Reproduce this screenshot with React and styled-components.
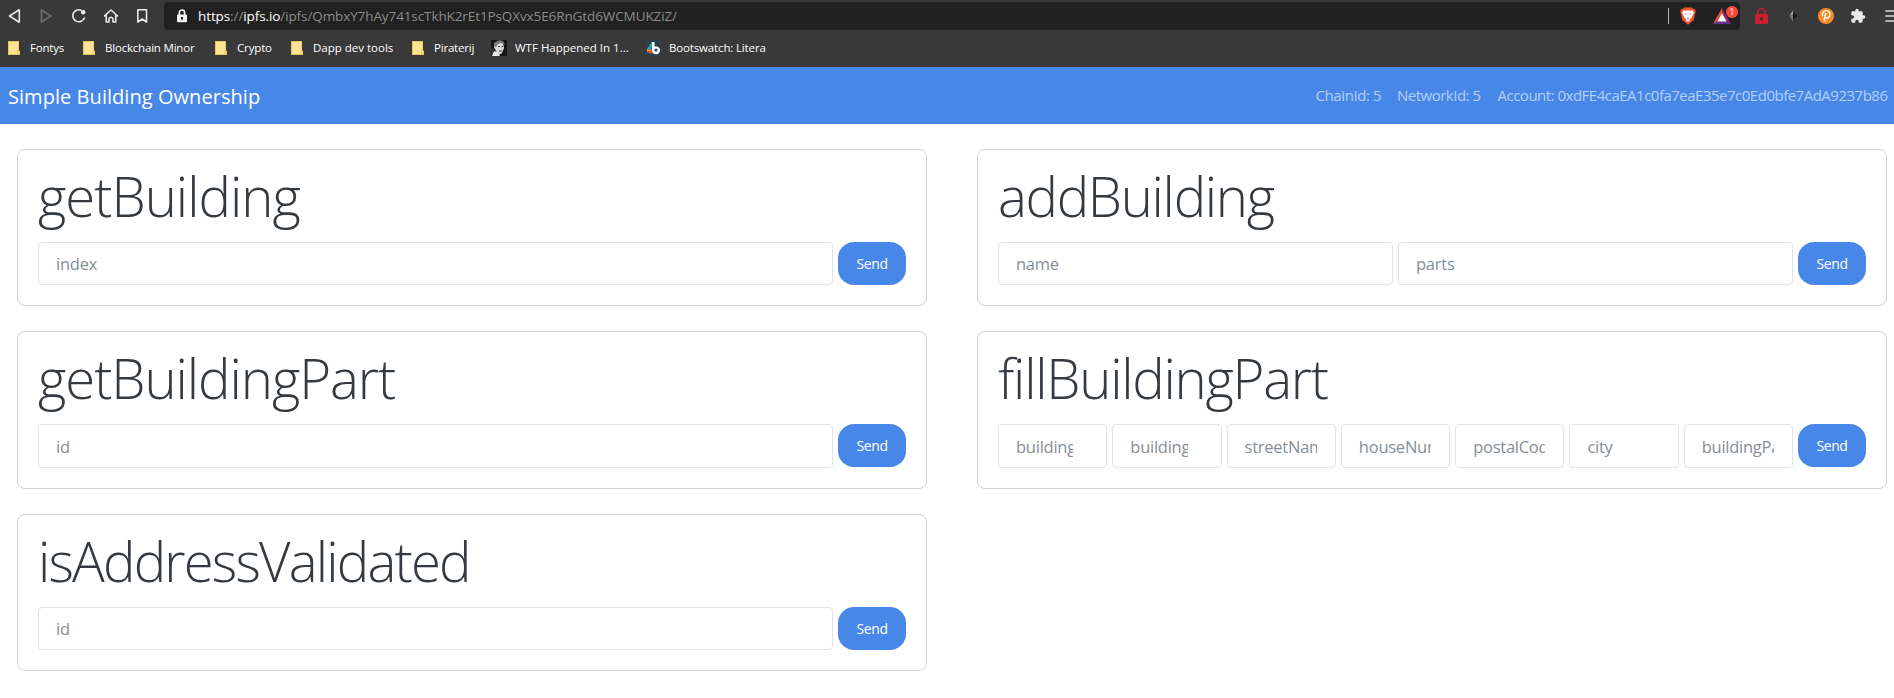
import React from "react";
import styled, { createGlobalStyle } from "styled-components";

const GlobalStyle = createGlobalStyle`
  *, *::before, *::after { box-sizing: border-box; }
  body {
    margin: 0;
    background: #fff;
    color: #343a40;
    font-family: "Open Sans", "Noto Sans", sans-serif;
    overflow: hidden;
  }
`;

const Browser = styled.header`
  height: 67px;
  background: #393939;
  overflow: hidden;
`;

const AddressRow = styled.div`
  display: flex;
  align-items: center;
  height: 32px;
  padding-left: 8px;
`;

const NavIcon = styled.svg`
  flex: none;
  width: 16px;
  height: 16px;
  margin-right: 16px;
  color: ${(p) => (p.$dim ? "#6f6f6f" : "#e8e8e8")};
  fill: none;
  stroke: currentColor;
  stroke-width: 1.6;
  stroke-linejoin: round;
  stroke-linecap: round;
`;

const UrlBar = styled.div`
  flex: none;
  display: flex;
  align-items: center;
  width: 1576px;
  height: 28px;
  margin-left: -4px;
  padding: 0 2px 0 12px;
  border-radius: 4px;
  background: #212121;
  color: #8b8b8b;
  font-size: 13.5px;
  white-space: nowrap;
`;

const Url = styled.span`
  flex: 1;
  margin-left: 10px;
  line-height: 18px;
  letter-spacing: ${(p) => p.$tracking}px;
`;

const UrlStrong = styled.span`
  color: #fff;
`;

const Divider = styled.span`
  width: 1px;
  height: 16px;
  margin-right: 11px;
  background: #b5b5b5;
`;

const Glyph = styled.svg`
  flex: none;
  display: block;
  width: ${(p) => p.$w}px;
  height: ${(p) => p.$h}px;
  margin-left: ${(p) => p.$left || 0}px;
`;

const BookmarkRow = styled.nav`
  display: flex;
  height: 32px;
  padding-left: 8px;
`;

const Bookmark = styled.a`
  flex: none;
  display: flex;
  align-items: center;
  gap: ${(p) => p.$gap}px;
  width: ${(p) => p.$width}px;
  color: #fff;
  font-size: 11.5px;
  line-height: 16px;
  letter-spacing: ${(p) => p.$tracking}px;
  white-space: nowrap;
`;

const Navbar = styled.nav`
  display: flex;
  align-items: center;
  justify-content: space-between;
  height: 57px;
  padding: 0 6px 0 8px;
  background: #4787e7;
`;

const Brand = styled.a`
  color: #fff;
  font-size: 20px;
  line-height: 30px;
  letter-spacing: ${(p) => p.$tracking}px;
  white-space: nowrap;
  padding-top: 2px;
`;

const Facts = styled.div`
  display: flex;
  padding-bottom: 2px;
`;

const Fact = styled.span`
  flex: none;
  width: ${(p) => p.$width}px;
  color: rgba(255, 255, 255, 0.6);
  font-size: 15px;
  line-height: 24px;
  letter-spacing: ${(p) => p.$tracking}px;
  white-space: nowrap;
`;

const Board = styled.main`
  display: grid;
  grid-template-columns: 910px 910px;
  grid-auto-rows: 157.25px;
  column-gap: 50px;
  row-gap: 25.2px;
  padding: 25px 7px 0 17px;
`;

const Card = styled.section`
  grid-column: ${(p) => p.$column};
  padding: 13px 20px 20px;
  border: 1px solid #d0d1d2;
  border-radius: 8px;
  background: #fff;
`;

const Title = styled.h1`
  margin: 0 0 11.8px;
  font-size: 54.5px;
  font-weight: 300;
  line-height: 67.2px;
  letter-spacing: ${(p) => p.$tracking}px;
  white-space: nowrap;
`;

const Form = styled.form`
  display: flex;
  gap: 5px;
`;

const Field = styled.input`
  flex: 1 1 0;
  min-width: 0;
  height: 43.4px;
  padding: 0 18px 0 17px;
  border: 1px solid #e1e3e5;
  border-radius: 4px;
  background: #fff;
  font-family: inherit;
  font-size: 16.5px;
  letter-spacing: -0.25px;

  &::placeholder {
    color: #868e96;
    opacity: 1;
  }
`;

const SendButton = styled.button`
  flex: none;
  width: 68px;
  height: 43px;
  padding: 0;
  border: 0;
  border-radius: 16px;
  background: #4787e7;
  color: #fff;
  font-family: inherit;
  font-size: 14px;
  letter-spacing: -0.4px;
`;

const FolderIcon = () => (
  <Glyph $w={12} $h={14} viewBox="0 0 12 14">
    <path d="M0 0H11V9L12 10V14H0Z" fill="#eec553" />
    <path d="M1 1H10.2V9.2H9V13H1Z" fill="#ffe399" />
    <path d="M10 10h1v3h-1z" fill="#ffe399" />
  </Glyph>
);

const PortraitIcon = () => (
  <Glyph $w={16} $h={16} viewBox="0 0 16 16">
    <rect width="16" height="16" fill="#151515" />
    <path d="M0 8h3v8H0z" fill="#303030" />
    <path d="M4 3Q8 0 12 3L13 8L11 13L8 15L5 11L3 7Z" fill="#d9d9d9" />
    <path d="M3 3Q7-1 12 1L14 5L10 3L7 4L5 7L3 6Z" fill="#777" />
    <path d="M1 16L3 11L6 12L9 16Z" fill="#eee" />
    <path d="M7 6h2v1H7zM10.5 6h1.5v1h-1.5zM8 10.5h3v1H8z" fill="#444" />
  </Glyph>
);

const BootswatchIcon = () => (
  <Glyph $w={15} $h={16} viewBox="0 0 15 16">
    <rect width="15" height="16" fill="#2c3e50" />
    <path d="M6 2L3 6L7 9Z" fill="#18bc9c" />
    <path d="M3 6L1 9L7 10Z" fill="#3498db" />
    <path d="M1 9L1 12L7 10Z" fill="#f39c12" />
    <path d="M1 12L6 14L7 10Z" fill="#e74c3c" />
    <path d="M6 2H8.5V6.6A4 4 0 1 1 6 10.4Z" fill="#fff" />
    <circle cx="10" cy="10" r="1.6" fill="#2c3e50" />
  </Glyph>
);

const UrlLock = () => (
  <Glyph $w={12} $h={14} viewBox="0 0 12 14">
    <path d="M3.4 6V3.6a2.6 2.6 0 0 1 5.2 0V6" fill="none" stroke="#f3f3f3" strokeWidth="1.7" />
    <rect x="1" y="5.4" width="10" height="7.8" rx="1" fill="#f3f3f3" />
    <rect x="5" y="8" width="2" height="2.6" fill="#212121" />
  </Glyph>
);

const BraveIcon = () => (
  <Glyph $w={16} $h={18} viewBox="0 0 16 18">
    <path d="M4 0.5H12L13.2 2H15L15.8 5L15 7L13.7 13L8 17.8L2.3 13L1 7L0.2 5L1 2H2.8Z" fill="#f0502b" />
    <path d="M3.4 3.2L6 3.7L8 3.2L10 3.7L12.6 3.2L14 5.8L12.2 9.2L12 10.8L9.5 12L10.4 13.2L8 15L5.6 13.2L6.5 12L4 10.8L3.8 9.2L2 5.8Z" fill="#fff" />
    <path d="M4.2 6.5L6.6 6.8L6 7.8ZM11.8 6.5L9.4 6.8L10 7.8ZM7.2 10H8.8L8 10.8ZM6.4 12L8 11.5L9.6 12L8 12.8Z" fill="#f0502b" />
  </Glyph>
);

const RewardsIcon = () => (
  <Glyph $w={25} $h={20} $left={17} viewBox="0 0 25 20">
    <path d="M9 2L0 18L4.4 15.4L9 7Z" fill="#f8502f" />
    <path d="M9 2L18 18L13.6 15.4L9 7Z" fill="#9e1f63" />
    <path d="M0 18H18L13.6 15.4H4.4Z" fill="#662d91" />
    <path d="M9 7L4.4 15.4H13.6Z" fill="#fff" />
    <circle cx="19" cy="6" r="6" fill="#fb4a3a" />
    <text x="19" y="9" textAnchor="middle" fontSize="8.5" fill="#fff">1</text>
  </Glyph>
);

const RedLock = () => (
  <Glyph $w={13} $h={16} $left={15} viewBox="0 0 13 16">
    <path d="M3 7V4a3.5 3.5 0 0 1 7 0V7" fill="none" stroke="#c8202f" strokeWidth="1.6" />
    <rect y="6" width="13" height="10" rx="1" fill="#c8202f" />
    <circle cx="6.5" cy="10.8" r="1.6" fill="#4b2226" />
  </Glyph>
);

const EtherIcon = () => (
  <Glyph $w={9} $h={14} $left={21} viewBox="0 0 9 14">
    <path d="M4 1L0.5 7L4 6Z" fill="#9a9a9a" />
    <path d="M0.5 7L4 13V6Z" fill="#7a7a7a" />
    <path d="M4 3L8.5 7L4 11Z" fill="#171717" />
  </Glyph>
);

const OrangeIcon = () => (
  <Glyph $w={16} $h={16} $left={20} viewBox="0 0 16 16">
    <circle cx="8" cy="8" r="8" fill="#f78c27" />
    <path d="M4.6 7.5A3.8 3.8 0 1 1 8.3 10.2M7.6 5.5L6.2 11.8" fill="none" stroke="#fff" strokeWidth="1.4" strokeLinecap="round" />
    <circle cx="7" cy="13" r=".8" fill="#fff" />
  </Glyph>
);

const PuzzleIcon = () => (
  <Glyph $w={16} $h={16} $left={16} viewBox="0 0 24 24">
    <path
      d="M20.5 11H19V7c0-1.1-.9-2-2-2h-4V3.5a2.5 2.5 0 0 0-5 0V5H4c-1.1 0-2 .9-2 2v3.8h1.5a2.7 2.7 0 0 1 0 5.4H2V20c0 1.1.9 2 2 2h3.8v-1.5a2.7 2.7 0 0 1 5.4 0V22H17c1.1 0 2-.9 2-2v-4h1.5a2.5 2.5 0 0 0 0-5z"
      fill="#e8e8e8"
    />
  </Glyph>
);

const MenuIcon = () => (
  <Glyph $w={16} $h={14} $left={19} viewBox="0 0 16 14">
    <path d="M1 2H15M1 7H15M1 12H15" stroke="#d5d5d5" strokeWidth="1.7" strokeLinecap="round" />
  </Glyph>
);

const bookmarks = [
  { label: "Fontys", width: 75, gap: 10, tracking: -0.2 },
  { label: "Blockchain Minor", width: 132, gap: 10, tracking: -0.2 },
  { label: "Crypto", width: 76, gap: 10, tracking: -0.15 },
  { label: "Dapp dev tools", width: 121, gap: 10, tracking: 0 },
  { label: "Piraterij", width: 79, gap: 10, tracking: -0.2 },
  { label: "WTF Happened In 1...", width: 155, gap: 8, tracking: 0, Icon: PortraitIcon },
  { label: "Bootswatch: Litera", width: 140, gap: 8, tracking: -0.15, Icon: BootswatchIcon },
];

const facts = [
  { text: "ChainId: 5", width: 81.5, tracking: -0.4 },
  { text: "NetworkId: 5", width: 100.5, tracking: -0.5 },
  { text: "Account: 0xdFE4caEA1c0fa7eaE35e7c0Ed0bfe7AdA9237b86", width: 390.5, tracking: -0.5 },
];

const cards = [
  { title: "getBuilding", tracking: -1, column: 1, fields: [{ name: "index" }] },
  { title: "addBuilding", tracking: -1.3, column: 2, fields: [{ name: "name" }, { name: "parts" }] },
  { title: "getBuildingPart", tracking: -1.05, column: 1, fields: [{ name: "id" }] },
  {
    title: "fillBuildingPart",
    tracking: -1.25,
    column: 2,
    fields: [
      { name: "buildingIndex", type: "number" },
      { name: "buildingPartIndex", type: "number" },
      { name: "streetName" },
      { name: "houseNumber" },
      { name: "postalCode" },
      { name: "city" },
      { name: "buildingPart" },
    ],
  },
  { title: "isAddressValidated", tracking: -1.8, column: 1, fields: [{ name: "id" }] },
];

export default function App() {
  return (
    <>
      <GlobalStyle />
      <Browser>
        <AddressRow>
          <NavIcon viewBox="0 0 16 16"><path d="M11.3 1.8V14.2L1.5 8Z" /></NavIcon>
          <NavIcon $dim viewBox="0 0 16 16"><path d="M1.5 1.8V14.2L10.8 8Z" /></NavIcon>
          <NavIcon viewBox="0 0 16 16">
            <path d="M9 2.2A6 6 0 1 0 12.4 10" />
            <circle cx="11.2" cy="4.3" r="1.5" fill="currentColor" />
          </NavIcon>
          <NavIcon viewBox="0 0 16 16"><path d="M0.5 8L7 2L13.5 8M2.2 7V14H5V10.5Q7 8 9 10.5V14H11.8V7" /></NavIcon>
          <NavIcon viewBox="0 0 16 16"><path d="M1.8 1.8H10.5V14L6.2 11L1.8 14Z" /></NavIcon>
          <UrlBar>
            <UrlLock />
            <Url $tracking={-0.1}>
              <UrlStrong>https</UrlStrong>://<UrlStrong>ipfs.io</UrlStrong>
              /ipfs/QmbxY7hAy741scTkhK2rEt1PsQXvx5E6RnGtd6WCMUKZiZ/
            </Url>
            <Divider />
            <BraveIcon />
            <RewardsIcon />
          </UrlBar>
          <RedLock />
          <EtherIcon />
          <OrangeIcon />
          <PuzzleIcon />
          <MenuIcon />
        </AddressRow>
        <BookmarkRow>
          {bookmarks.map(({ label, width, gap, tracking, Icon = FolderIcon }) => (
            <Bookmark key={label} $width={width} $gap={gap} $tracking={tracking}>
              <Icon />
              {label}
            </Bookmark>
          ))}
        </BookmarkRow>
      </Browser>
      <Navbar>
        <Brand $tracking={0.05}>Simple Building Ownership</Brand>
        <Facts>
          {facts.map((f) => (
            <Fact key={f.text} $width={f.width} $tracking={f.tracking}>{f.text}</Fact>
          ))}
        </Facts>
      </Navbar>
      <Board>
        {cards.map((card) => (
          <Card key={card.title} $column={card.column}>
            <Title $tracking={card.tracking}>{card.title}</Title>
            <Form onSubmit={(e) => e.preventDefault()}>
              {card.fields.map((f) => (
                <Field key={f.name} type={f.type || "text"} placeholder={f.name} />
              ))}
              <SendButton type="submit">Send</SendButton>
            </Form>
          </Card>
        ))}
      </Board>
    </>
  );
}
